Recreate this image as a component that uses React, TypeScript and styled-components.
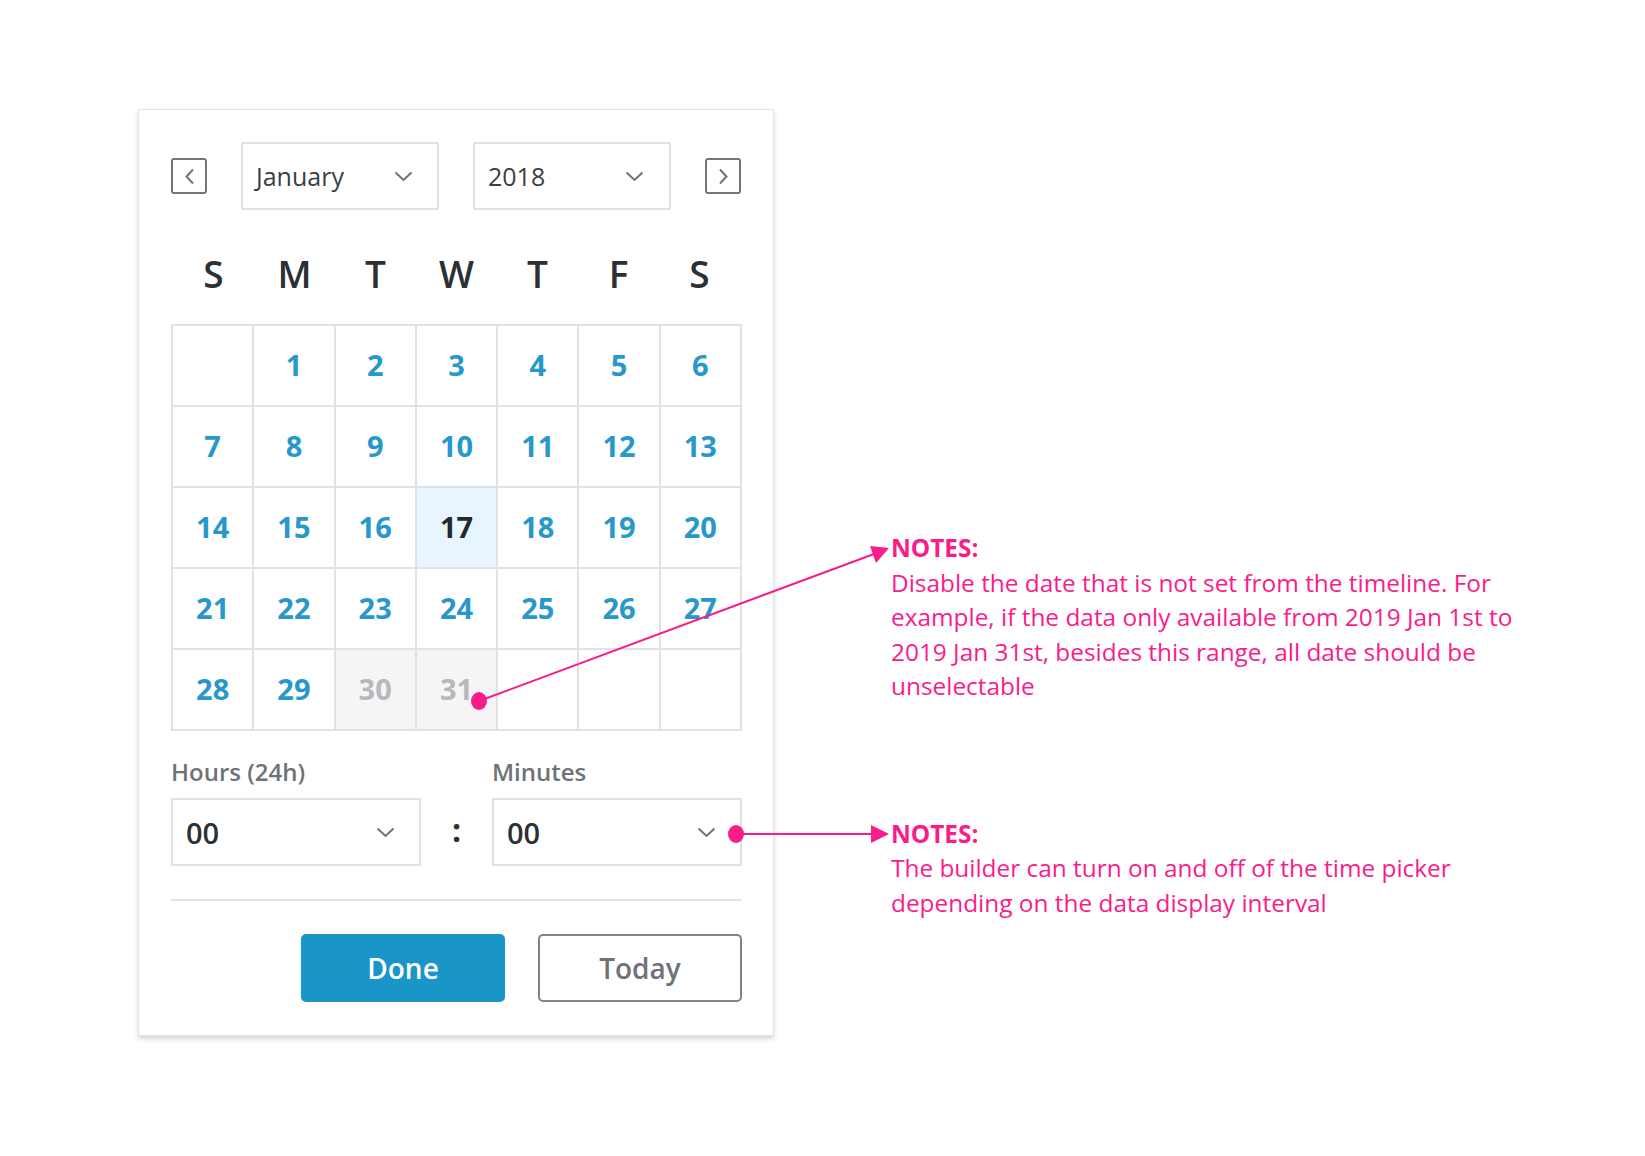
import styled, { createGlobalStyle } from "styled-components";

const colors = {
  line: "#dfe2e6",
  text: "#2b3035",
  muted: "#6e7378",
  blue: "#2898ca",
  button: "#1a95c8",
  pink: "#f91c8b",
};

const GlobalStyle = createGlobalStyle`
  html, body {
    margin: 0;
    padding: 0;
    background: #ffffff;
    font-family: "Open Sans", "Noto Sans", sans-serif;
  }
`;

const Page = styled.div`
  position: relative;
  width: 1645px;
  height: 1156px;
  display: flex;
  flex-direction: row;
  align-items: flex-start;
`;

const Card = styled.div`
  box-sizing: border-box;
  width: 636px;
  margin: 109px 0 0 138px;
  padding: 32px 31px 33px 32px;
  background: #ffffff;
  border: 1px solid #e2e4e7;
  box-shadow: 0 3px 5px rgba(0, 0, 0, 0.16);
  display: flex;
  flex-direction: column;
`;

const Header = styled.div`
  display: flex;
  flex-direction: row;
  align-items: center;
  gap: 34px;
`;

const NavButton = styled.div`
  box-sizing: border-box;
  width: 36px;
  height: 36px;
  border: 2px solid #72777d;
  border-radius: 3px;
  display: flex;
  align-items: center;
  justify-content: center;
  color: #72777d;
`;

const Select = styled.div<{ $width?: number; $pad?: number }>`
  box-sizing: border-box;
  width: ${(p) => (p.$width ? `${p.$width}px` : "100%")};
  height: 68px;
  border: 2px solid ${colors.line};
  display: flex;
  flex-direction: row;
  align-items: center;
  justify-content: space-between;
  padding: 0 ${(p) => p.$pad ?? 24}px 0 13px;
  color: #3a3f44;
  font-size: 25px;
`;

const TimeValue = styled.span`
  font-size: 29px;
  font-weight: 600;
  color: ${colors.text};
`;

const WeekRow = styled.div`
  display: grid;
  grid-template-columns: repeat(7, 1fr);
  height: 50px;
  margin: 38px 0 26px;
  padding: 0 2px;
`;

const WeekDay = styled.div`
  display: flex;
  align-items: center;
  justify-content: center;
  font-size: 37px;
  font-weight: 600;
  color: ${colors.text};
`;

const DayGrid = styled.div`
  display: grid;
  grid-template-columns: repeat(7, 1fr);
  grid-auto-rows: 79px;
  gap: 2px;
  padding: 2px;
  background: ${colors.line};
`;

const DayCell = styled.div<{ $state?: "today" | "disabled" | "empty" }>`
  display: flex;
  align-items: center;
  justify-content: center;
  padding-bottom: 3px;
  font-size: 29px;
  font-weight: 700;
  background: ${(p) =>
    p.$state === "today" ? "#e9f5fe" : p.$state === "disabled" ? "#f5f5f5" : "#ffffff"};
  color: ${(p) =>
    p.$state === "today" ? "#24292e" : p.$state === "disabled" ? "#b5b9be" : colors.blue};
`;

const TimeSection = styled.div`
  display: grid;
  grid-template-columns: 1fr 71px 1fr;
  grid-template-rows: 32px 68px;
  row-gap: 9px;
  margin-top: 26px;
`;

const TimeLabel = styled.div`
  font-size: 24px;
  font-weight: 600;
  line-height: 32px;
  margin-top: -1px;
  color: ${colors.muted};
`;

const Colon = styled.div`
  display: flex;
  align-items: center;
  justify-content: center;
  font-size: 32px;
  font-weight: 700;
  color: ${colors.text};
  padding-bottom: 6px;
`;

const Divider = styled.div`
  height: 2px;
  background: #e3e5e8;
  margin-top: 33px;
`;

const Actions = styled.div`
  display: flex;
  flex-direction: row;
  justify-content: flex-end;
  gap: 33px;
  margin-top: 33px;
`;

const Button = styled.div<{ $primary?: boolean }>`
  box-sizing: border-box;
  width: 204px;
  height: 68px;
  border-radius: 5px;
  display: flex;
  align-items: center;
  justify-content: center;
  font-size: 28px;
  font-weight: 600;
  background: ${(p) => (p.$primary ? colors.button : "#ffffff")};
  color: ${(p) => (p.$primary ? "#ffffff" : "#6e7378")};
  border: 2px solid ${(p) => (p.$primary ? colors.button : "#80848a")};
`;

const Notes = styled.div`
  display: flex;
  flex-direction: column;
  gap: 113px;
  margin: 531px 0 0 117px;
  width: 660px;
`;

const Note = styled.div`
  color: ${colors.pink};
  font-size: 24.4px;
  line-height: 34.5px;
`;

const NoteTitle = styled.div`
  font-weight: 700;
`;

const Overlay = styled.svg`
  position: absolute;
  left: 0;
  top: 0;
  pointer-events: none;
`;

function ChevronDown() {
  return (
    <svg width="19" height="11" viewBox="0 0 19 11">
      <polyline points="1.5,1.5 9.5,9 17.5,1.5" fill="none" stroke="#6e737a" strokeWidth="2" />
    </svg>
  );
}

function ChevronSide({ dir }: { dir: "left" | "right" }) {
  const pts = dir === "left" ? "9,1.5 2.5,8.5 9,15.5" : "2,1.5 8.5,8.5 2,15.5";
  return (
    <svg width="11" height="17" viewBox="0 0 11 17">
      <polyline points={pts} fill="none" stroke="#6e737a" strokeWidth="2" />
    </svg>
  );
}

const weekDays = ["S", "M", "T", "W", "T", "F", "S"];

const days: (number | null)[] = [
  null,
  ...Array.from({ length: 31 }, (_, i) => i + 1),
  null,
  null,
  null,
];

function dayState(d: number | null) {
  if (d === null) return "empty" as const;
  if (d === 17) return "today" as const;
  if (d >= 30) return "disabled" as const;
  return undefined;
}

export default function App() {
  return (
    <>
      <GlobalStyle />
      <Page>
        <Card>
          <Header>
            <NavButton>
              <ChevronSide dir="left" />
            </NavButton>
            <Select $width={198} $pad={24}>
              <span>January</span>
              <ChevronDown />
            </Select>
            <Select $width={198} $pad={25}>
              <span>2018</span>
              <ChevronDown />
            </Select>
            <NavButton>
              <ChevronSide dir="right" />
            </NavButton>
          </Header>

          <WeekRow>
            {weekDays.map((d, i) => (
              <WeekDay key={i}>{d}</WeekDay>
            ))}
          </WeekRow>

          <DayGrid>
            {days.map((d, i) => (
              <DayCell key={i} $state={dayState(d)}>
                {d}
              </DayCell>
            ))}
          </DayGrid>

          <TimeSection>
            <TimeLabel>Hours (24h)</TimeLabel>
            <div />
            <TimeLabel>Minutes</TimeLabel>
            <Select $pad={24}>
              <TimeValue>00</TimeValue>
              <ChevronDown />
            </Select>
            <Colon>:</Colon>
            <Select $pad={24}>
              <TimeValue>00</TimeValue>
              <ChevronDown />
            </Select>
          </TimeSection>

          <Divider />

          <Actions>
            <Button $primary>Done</Button>
            <Button>Today</Button>
          </Actions>
        </Card>

        <Notes>
          <Note>
            <NoteTitle>NOTES:</NoteTitle>
            Disable the date that is not set from the timeline. For
            <br />
            example, if the data only available from 2019 Jan 1st to
            <br />
            2019 Jan 31st, besides this range, all date should be
            <br />
            unselectable
          </Note>
          <Note>
            <NoteTitle>NOTES:</NoteTitle>
            The builder can turn on and off of the time picker
            <br />
            depending on the data display interval
          </Note>
        </Notes>

        <Overlay width="1645" height="1156" viewBox="0 0 1645 1156">
          <line x1="479" y1="701" x2="874" y2="554" stroke={colors.pink} strokeWidth="2" />
          <polygon points="889,548 870,546 876,563" fill={colors.pink} />
          <ellipse cx="479" cy="701" rx="8" ry="9" fill={colors.pink} />
          <line x1="736" y1="834" x2="873" y2="834" stroke={colors.pink} strokeWidth="2" />
          <polygon points="889,834 871,825 871,843" fill={colors.pink} />
          <ellipse cx="736" cy="834" rx="8" ry="9" fill={colors.pink} />
        </Overlay>
      </Page>
    </>
  );
}
